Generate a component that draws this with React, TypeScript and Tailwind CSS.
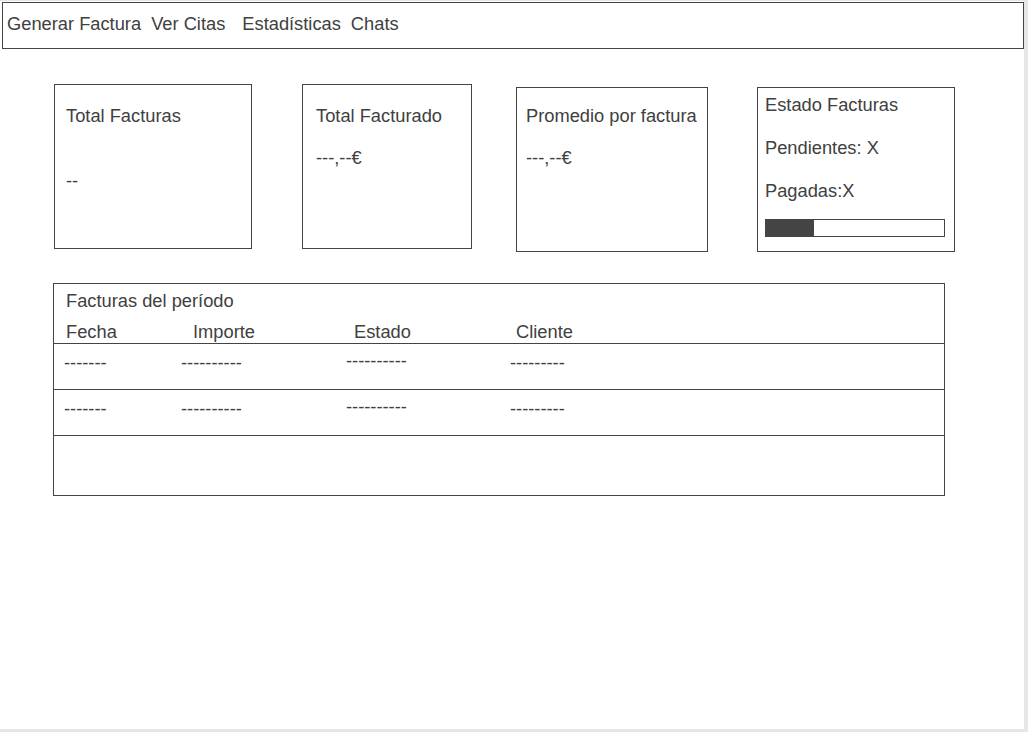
const font = { fontFamily: '"Liberation Sans", Arial, sans-serif' }

function Card({
  className,
  children,
}: {
  className: string
  children: React.ReactNode
}) {
  return (
    <div className={`h-[165px] shrink-0 border border-[#444] bg-white ${className}`}>
      {children}
    </div>
  )
}

const rows = [
  { fecha: '-------', importe: '----------', estado: '----------', cliente: '---------' },
  { fecha: '-------', importe: '----------', estado: '----------', cliente: '---------' },
]

export default function App() {
  return (
    <div
      className="h-[732px] w-[1028px] overflow-hidden bg-[#e6e6e6] text-[18.3px] leading-[21px] text-[#404040]"
      style={font}
    >
      <div className="mt-px h-[728px] w-[1024px] bg-white pt-px">
        {/* nav */}
        <nav className="ml-[2px] flex h-[47px] w-[1022px] items-center border border-[#444] pb-[4px] pl-[4px]">
          <span>Generar Factura</span>
          <span className="ml-[10px]">Ver Citas</span>
          <span className="ml-[17px]">Estadísticas</span>
          <span className="ml-[10px]">Chats</span>
        </nav>

        {/* cards */}
        <div className="mt-[35px] flex items-start">
          <Card className="ml-[54px] w-[198px] pl-[11px] pt-[20px]">
            <div>Total Facturas</div>
            <div className="mt-[44px]">--</div>
          </Card>
          <Card className="ml-[50px] w-[170px] pl-[13px] pt-[20px]">
            <div>Total Facturado</div>
            <div className="mt-[21px]">---,--€</div>
          </Card>
          <Card className="ml-[44px] mt-[3px] w-[192px] pl-[9px] pt-[17px]">
            <div>Promedio por factura</div>
            <div className="mt-[21px]">---,--€</div>
          </Card>
          <Card className="ml-[49px] mt-[3px] w-[198px] pl-[7px] pt-[6px]">
            <div>Estado Facturas</div>
            <div className="mt-[22px]">Pendientes: X</div>
            <div className="mt-[22px]">Pagadas:X</div>
            <div className="mt-[18px] h-[18px] w-[180px] border border-[#444]">
              <div className="h-full w-[48px] bg-[#444]" />
            </div>
          </Card>
        </div>

        {/* table */}
        <div className="ml-[53px] mt-[31px] h-[213px] w-[892px] border border-[#444]">
          <div className="h-[60px] border-b border-[#444] pl-[12px] pt-[6px]">
            <div>Facturas del período</div>
            <div className="mt-[10px] flex">
              <span className="w-[127px]">Fecha</span>
              <span className="w-[161px]">Importe</span>
              <span className="w-[162px]">Estado</span>
              <span>Cliente</span>
            </div>
          </div>
          {rows.map((r, i) => (
            <div key={i} className="flex h-[46px] border-b border-[#444] pl-[10px] pt-[8px]">
              <span className="w-[117px]">{r.fecha}</span>
              <span className="w-[165px]">{r.importe}</span>
              <span className="-mt-[2px] w-[164px]">{r.estado}</span>
              <span>{r.cliente}</span>
            </div>
          ))}
        </div>
      </div>
    </div>
  )
}
